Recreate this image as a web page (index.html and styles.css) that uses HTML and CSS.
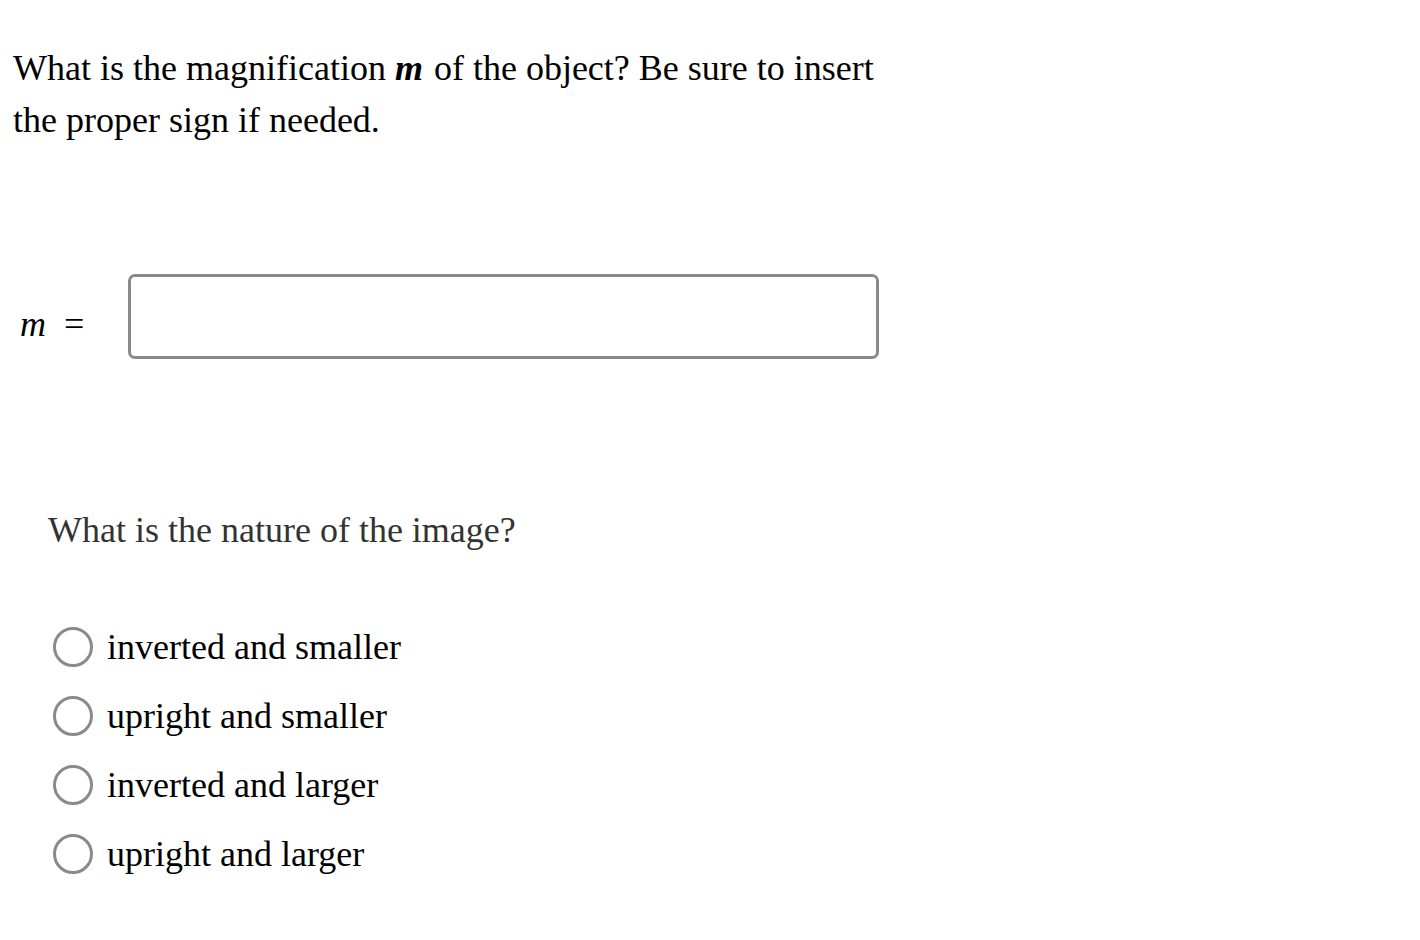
FILE: index.html
```html
<!DOCTYPE html>
<html lang="en">
<head>
  <meta charset="UTF-8" />
  <title>Magnification</title>
  <link rel="stylesheet" href="styles.css">
</head>
<body>
  <div class="question">
    <p class="prompt">What is the magnification <em class="var">m</em> of the object? Be sure to insert the proper sign if needed.</p>

    <div class="answer-row">
      <label class="math" for="mag"><i>m</i><span class="eq">=</span></label>
      <input type="text" id="mag" class="answer-box" />
    </div>

    <div class="choice-block">
      <p class="sub-prompt">What is the nature of the image?</p>
      <ul class="choices">
        <li><label><input type="radio" name="nature" /> inverted and smaller</label></li>
        <li><label><input type="radio" name="nature" /> upright and smaller</label></li>
        <li><label><input type="radio" name="nature" /> inverted and larger</label></li>
        <li><label><input type="radio" name="nature" /> upright and larger</label></li>
      </ul>
    </div>
  </div>
</body>
</html>
```

FILE: styles.css
```css
body {
  margin: 0;
  padding: 42px 13px;
  font-family: "Liberation Serif", "Times New Roman", serif;
  color: #000;
  background: #fff;
}

.question {
  width: 870px;
}

.prompt {
  margin: 0;
  font-size: 36px;
  line-height: 52px;
}

.prompt .var {
  font-weight: bold;
  padding-right: 2px;
}

.answer-row {
  display: flex;
  align-items: center;
  margin-top: 128px;
}

.math {
  width: 115px;
  padding-left: 7px;
  padding-top: 14px;
  box-sizing: border-box;
  font-size: 36px;
}

.math .eq {
  margin-left: 18px;
}

.answer-box {
  width: 751px;
  height: 85px;
  box-sizing: border-box;
  border: 3px solid #8a8a8a;
  border-radius: 7px;
  font-size: 32px;
  padding: 0 12px;
  outline: none;
}

.choice-block {
  padding-left: 35px;
  margin-top: 149px;
}

.sub-prompt {
  margin: 0;
  font-size: 36px;
  line-height: 44px;
  color: #333;
}

.choices {
  list-style: none;
  margin: 60px 0 0;
  padding: 0 0 0 5px;
}

.choices li {
  height: 69px;
  display: flex;
  align-items: center;
  font-size: 36px;
}

.choices label {
  display: flex;
  align-items: center;
  gap: 14px;
}

.choices input[type="radio"] {
  appearance: none;
  -webkit-appearance: none;
  margin: 0;
  width: 40px;
  height: 40px;
  border: 3px solid #8a8a8a;
  border-radius: 50%;
  background: #fff;
}
```
